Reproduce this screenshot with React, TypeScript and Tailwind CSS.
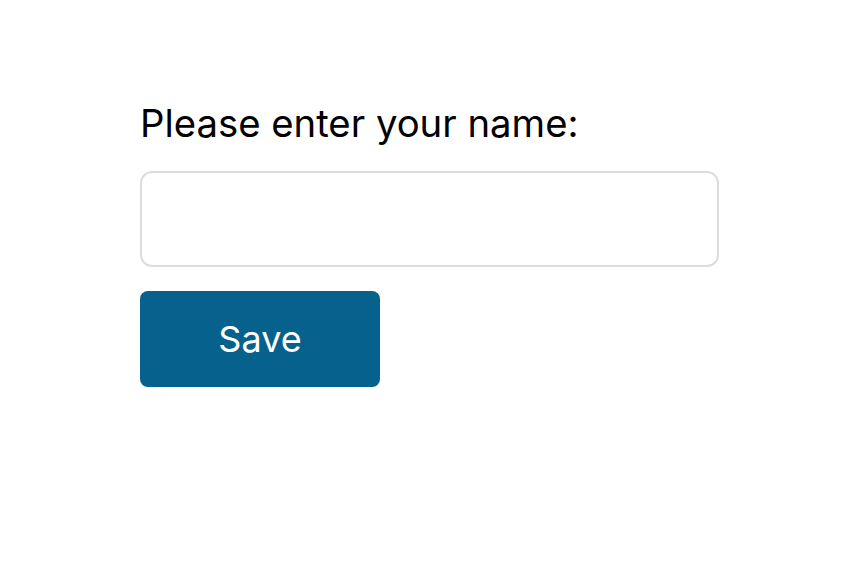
export default function App() {
  return (
    <div className="min-h-screen bg-white font-['Inter',sans-serif] text-black">
      <div className="pl-[140px] pt-[100px] w-[719px]">
        <label htmlFor="name" className="block text-[38.3px] leading-[46px]">
          Please enter your name:
        </label>
        <input
          id="name"
          type="text"
          className="mt-[25px] block w-[579px] h-[96px] rounded-[12px] border-2 border-[#dddddd] bg-white px-4 text-[32px] outline-none"
        />
        <button className="mt-[24px] block w-[240px] h-[96px] rounded-[8px] bg-[#06628c] text-white text-[36px]">
          Save
        </button>
      </div>
    </div>
  );
}
